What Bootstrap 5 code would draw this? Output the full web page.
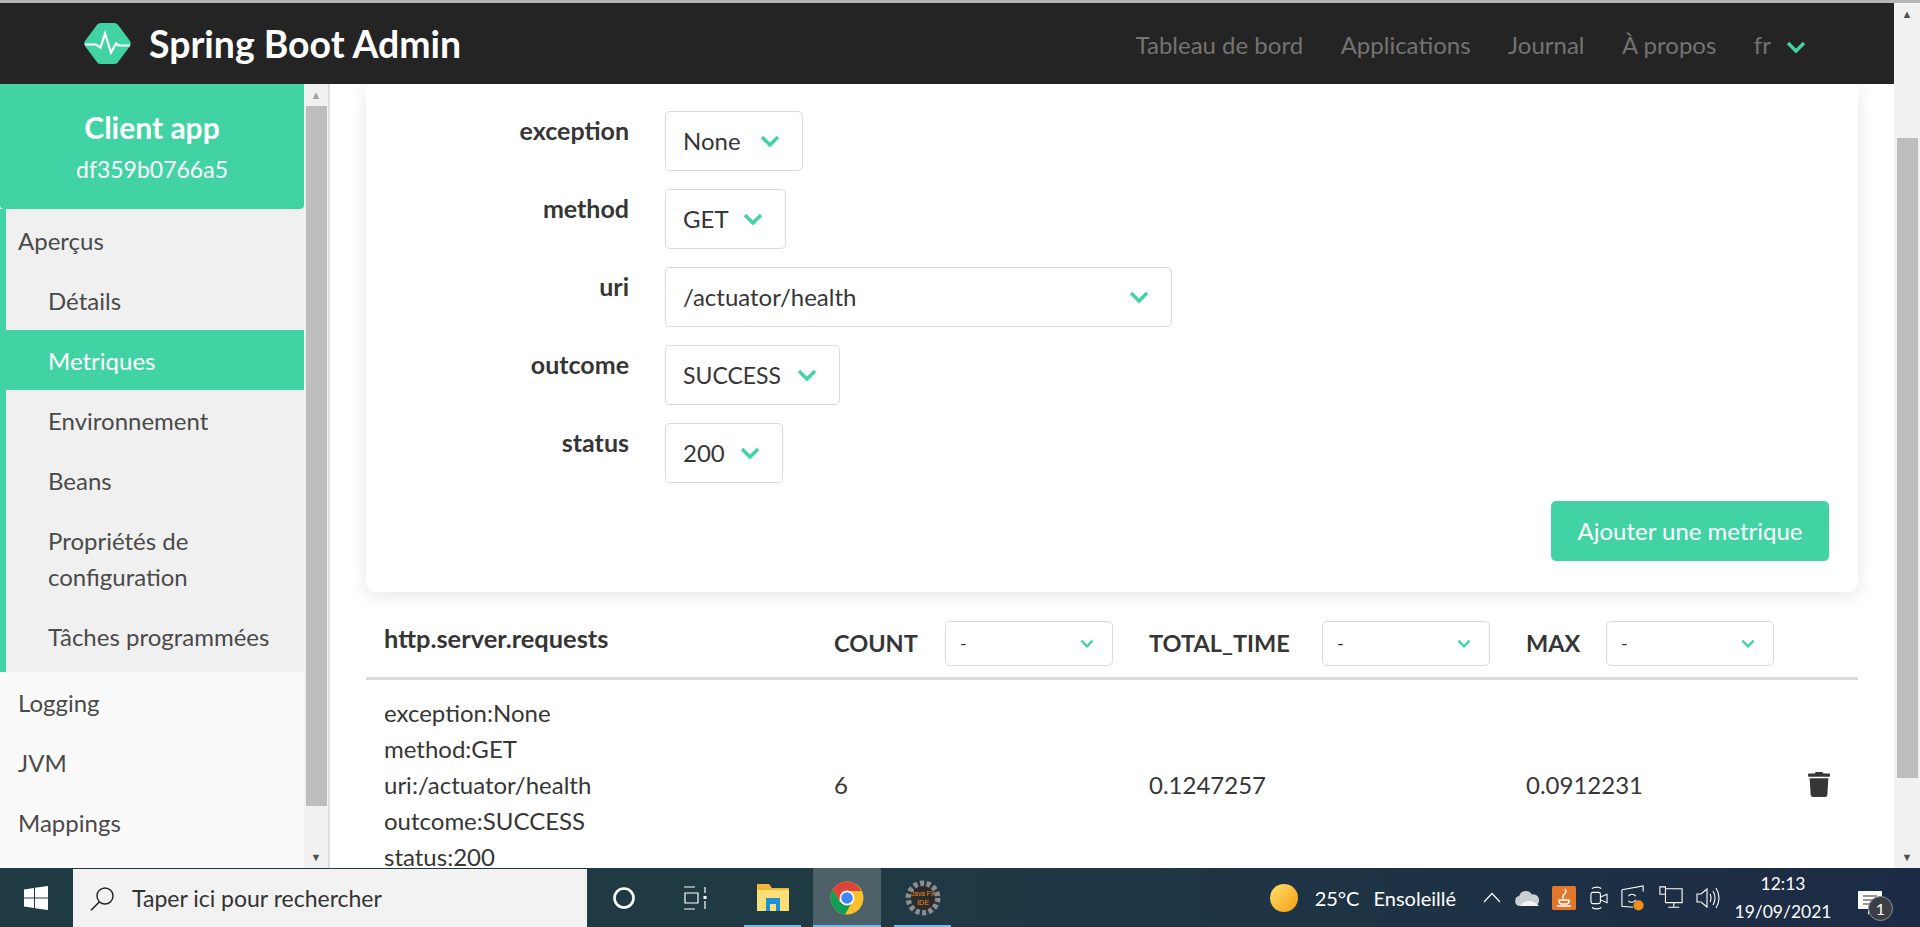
<!DOCTYPE html>
<html lang="fr">
<head>
    <meta charset="UTF-8">
    <meta name="viewport" content="width=device-width, initial-scale=1.0">
    <title>Spring Boot Admin</title>
    <link href="https://cdn.jsdelivr.net/npm/bootstrap@5.3.0/dist/css/bootstrap.min.css" rel="stylesheet">
    <style>
        html, body { height: 100%; }
        body { font-family: Lato, "Open Sans", "Liberation Sans", sans-serif; font-size: 24px; line-height: 1.5; color: #363636; background: #fff; overflow: hidden; }
        .screen { height: 927px; }
        .top-strip { height: 3px; background: #b5b5b5; }
        .sba-nav { height: 81px; background: #242424; padding: 0 88px 0 84px; flex-wrap: nowrap; }
        .sba-brand { color: #fff; font-size: 37.4px; font-weight: 700; gap: 18px; padding: 0; margin: 0; }
        .sba-brand:hover { color: #fff; }
        .brand-text { padding-top: 2px; }
        .sba-links { gap: 37.5px; font-size: 24px; padding-top: 2px; }
        .sba-links a { color: #737373; text-decoration: none; }
        .chev-nav { margin-left: 15px; }

        .sidebar { width: 304px; background: #fafafa; overflow: hidden; }
        .side-head { height: 125px; background: #42d3a5; color: #fff; border-radius: 0 0 4px 4px; }
        .side-title { font-size: 30px; font-weight: 700; line-height: 36px; }
        .side-sub { font-size: 23px; line-height: 30px; margin-top: 9px; }
        .side-group { background: #f0f0f0; border-left: 6px solid #42d3a5; padding-bottom: 6px; }
        .side-link { display: block; color: #4a4a4a; text-decoration: none; padding: 13px 18px 11px; line-height: 36px; background: transparent; border: 0; }
        .side-group .side-link.sub { padding-left: 42px; }
        .side-group .side-top { padding-left: 12px; padding-top: 14px; padding-bottom: 11px; }
        .side-link.on { background: #42d3a5; color: #fff; }
        .side-link.sub.two { padding-right: 30px; }

        .sbar { background: #f1f1f1; }
        .sbar-left { width: 26px; border-right: 2px solid #e0e0e0; }
        .sbar-right { width: 26px; }
        .sbar-arrow { height: 22px; font-size: 11px; line-height: 22px; color: #a3a3a3; text-align: center; }
        .sbar-arrow.dark { color: #505050; }
        .thumb { background: #bdbdbd; margin: 0 1px 0 2px; }
        .thumb-left { height: 700px; }
        .thumb-right { height: 640px; margin-top: 113px; margin-left: 3px; margin-right: 2px; }

        .content-area { min-width: 0; overflow: hidden; }
        .metric-box { margin-left: 36px; width: 1492px; background: #fff; border-radius: 0 0 10px 10px; box-shadow: 0 4px 20px rgba(10,10,10,.1); padding: 27px 29px 31px 0; }
        .f-row { margin-bottom: 18px; gap: 36px; }
        .f-label { width: 263px; text-align: right; font-size: 25px; font-weight: 700; padding-top: 1px; line-height: 36px; }
        .pick { height: 60px; font-size: 24px; color: #363636; border: 1px solid #dbdbdb; border-radius: 5px; padding: 0 17px;
            background-color: #fff; background-repeat: no-repeat; background-position: right 22px center; background-size: 20px 14px; box-shadow: none;
            background-image: url("data:image/svg+xml,%3Csvg xmlns='http://www.w3.org/2000/svg' viewBox='0 0 20 14'%3E%3Cpath d='M2 3l8 8 8-8' fill='none' stroke='%2342d3a5' stroke-width='3.4'/%3E%3C/svg%3E"); }
        .w-none { width: 138px; }
        .w-get { width: 121px; }
        .w-uri { width: 507px; }
        .w-succ { width: 175px; font-size: 23px; }
        .w-200 { width: 118px; }
        .w-small { width: 168px; height: 45px; font-size: 18px; padding: 0 14px; background-size: 14px 11px; background-position: right 18px center; }
        .add-btn { height: 60px; width: 278px; background: #42d3a5; color: #fff; border: 0; border-radius: 5px; font-size: 24px; padding: 0; }
        .add-btn:hover { background: #42d3a5; color: #fff; }

        .metric-table { position: relative; margin: 16px 0 0 36px; width: 1492px; table-layout: fixed; background: #fff; --bs-table-bg: transparent; color: #363636; }
        .metric-table th, .metric-table td { border: 0; padding: 0; vertical-align: middle; }
        .metric-table thead th { height: 70px; border-bottom: 3px solid #dbdbdb; font-size: 23.5px; font-weight: 700; white-space: nowrap; }
        .metric-table .c1 { width: 450px; padding-left: 18px; }
        .metric-table .c2 { width: 315px; padding-left: 18px; }
        .metric-table .c3 { width: 377px; padding-left: 18px; }
        .metric-table .c4 { width: 282px; padding-left: 18px; }
        .metric-table .c5 { width: 68px; padding-left: 18px; }
        .metric-table thead th.title-cell { padding-bottom: 8px; font-size: 25.4px; }
        .head-cell { padding-top: 2px; }
        .lab-count { width: 111px; }
        .lab-total { width: 173px; }
        .lab-max { width: 80px; }
        .metric-table td.tags { padding-top: 15px; padding-bottom: 15px; line-height: 36px; white-space: nowrap; }

        .taskbar { height: 59px; background: linear-gradient(90deg, #203a43 0, #203a44 45%, #1c2b45 100%); color: #fff; position: relative; }
        .win-slot { width: 73px; padding-left: 24px; }
        .search-box { width: 514px; height: 58px; margin-top: 1px; background: #f2f2f2; color: #333; gap: 17px; padding-left: 17px; font-size: 23px; }
        .task-slot { height: 59px; width: 68px; position: relative; }
        .task-slot.run::after { content: ""; position: absolute; left: 0; right: 0; bottom: 0; height: 2px; background: #76b9ed; }
        .task-slot.cur { background: #4b6067; }
        .tray-text { font-size: 20px; white-space: nowrap; }
        .clock { width: 112px; font-size: 17.5px; line-height: 28px; text-align: center; }
        .note-slot { width: 81px; height: 59px; padding: 16px 0 0 19px; }
        .note-badge { position: absolute; right: 27px; bottom: 6px; width: 25px; height: 25px; border-radius: 50%; background: #3b3f45; border: 1px solid #8a8f95; font-size: 16px; line-height: 23px; text-align: center; }
    </style>
</head>
<body>
<div class="screen d-flex flex-column">
    <div class="top-strip flex-shrink-0"></div>
    <div class="d-flex flex-grow-1 overflow-hidden">
        <div class="d-flex flex-column flex-grow-1 overflow-hidden">
            <nav class="navbar sba-nav flex-shrink-0">
                <a class="navbar-brand sba-brand d-flex align-items-center" href="#">
                    <svg width="47" height="41" viewBox="0 0 47 41">
                        <path d="M12.5 2.5Q13.8 0 16.5 0h14q2.700 0 4 2.500L46 18q1.500 2.500 0 5L34.500 38.500q-1.300 2.500-4 2.500h-14q-2.700 0-4-2.500L1 23q-1.500-2.500 0-5z" fill="#42d3a5"/>
                        <path d="M1 21.500h11l4.500 3 4.500-14 6 19 5-9 3 2h11" fill="none" stroke="#fff" stroke-width="2.200"/>
                    </svg>
                    <span class="brand-text">Spring Boot Admin</span>
                </a>
                <div class="sba-links d-flex align-items-center">
                    <a href="#">Tableau de bord</a>
                    <a href="#">Applications</a>
                    <a href="#">Journal</a>
                    <a href="#">À propos</a>
                    <a href="#">fr<svg class="chev-nav" width="20" height="14" viewBox="0 0 20 14"><path d="M2 3l8 8 8-8" fill="none" stroke="#42d3a5" stroke-width="3.400"/></svg></a>
                </div>
            </nav>
            <div class="d-flex flex-grow-1 overflow-hidden">
                <aside class="sidebar flex-shrink-0">
                    <div class="side-head d-flex flex-column align-items-center justify-content-center">
                        <div class="side-title">Client app</div>
                        <div class="side-sub">df359b0766a5</div>
                    </div>
                    <div class="side-group">
                        <a class="side-link side-top" href="#">Aperçus</a>
                        <a class="side-link sub" href="#">Détails</a>
                        <a class="side-link sub on" href="#">Metriques</a>
                        <a class="side-link sub" href="#">Environnement</a>
                        <a class="side-link sub" href="#">Beans</a>
                        <a class="side-link sub two" href="#">Propriétés de configuration</a>
                        <a class="side-link sub" href="#">Tâches programmées</a>
                    </div>
                    <a class="side-link" href="#">Logging</a>
                    <a class="side-link" href="#">JVM</a>
                    <a class="side-link" href="#">Mappings</a>
                </aside>
                <div class="sbar sbar-left flex-shrink-0 d-flex flex-column">
                    <div class="sbar-arrow">▲</div>
                    <div class="thumb thumb-left"></div>
                    <div class="flex-grow-1"></div>
                    <div class="sbar-arrow dark">▼</div>
                </div>
                <main class="content-area flex-grow-1">
                    <div class="metric-box">
                        <div class="f-row d-flex"><label class="f-label">exception</label><select class="form-select pick w-none"><option>None</option></select></div>
                        <div class="f-row d-flex"><label class="f-label">method</label><select class="form-select pick w-get"><option>GET</option></select></div>
                        <div class="f-row d-flex"><label class="f-label">uri</label><select class="form-select pick w-uri"><option>/actuator/health</option></select></div>
                        <div class="f-row d-flex"><label class="f-label">outcome</label><select class="form-select pick w-succ"><option>SUCCESS</option></select></div>
                        <div class="f-row d-flex"><label class="f-label">status</label><select class="form-select pick w-200"><option>200</option></select></div>
                        <div class="d-flex justify-content-end"><button type="button" class="btn add-btn">Ajouter une metrique</button></div>
                    </div>
                    <table class="table metric-table mb-0">
                        <thead>
                            <tr>
                                <th class="c1 title-cell">http.server.requests</th>
                                <th class="c2"><div class="head-cell d-flex align-items-center"><span class="lab-count">COUNT</span><select class="form-select pick w-small"><option>-</option></select></div></th>
                                <th class="c3"><div class="head-cell d-flex align-items-center"><span class="lab-total">TOTAL_TIME</span><select class="form-select pick w-small"><option>-</option></select></div></th>
                                <th class="c4"><div class="head-cell d-flex align-items-center"><span class="lab-max">MAX</span><select class="form-select pick w-small"><option>-</option></select></div></th>
                                <th class="c5"></th>
                            </tr>
                        </thead>
                        <tbody>
                            <tr>
                                <td class="c1 tags">exception:None<br>method:GET<br>uri:/actuator/health<br>outcome:SUCCESS<br>status:200</td>
                                <td class="c2">6</td>
                                <td class="c3">0.1247257</td>
                                <td class="c4">0.0912231</td>
                                <td class="c5"><svg class="d-block" width="22" height="25" viewBox="0 0 448 512"><path fill="#363636" d="M432 32H312l-9.400-18.700A24 24 0 0 0 281.100 0H166.800a23.720 23.720 0 0 0-21.400 13.300L136 32H16A16 16 0 0 0 0 48v32a16 16 0 0 0 16 16h416a16 16 0 0 0 16-16V48a16 16 0 0 0-16-16zM53.200 467a48 48 0 0 0 47.900 45h245.800a48 48 0 0 0 47.900-45L416 128H32z"/></svg></td>
                            </tr>
                        </tbody>
                    </table>
                </main>
            </div>
        </div>
        <div class="sbar sbar-right flex-shrink-0 d-flex flex-column">
            <div class="sbar-arrow dark">▲</div>
            <div class="thumb thumb-right"></div>
            <div class="flex-grow-1"></div>
            <div class="sbar-arrow dark">▼</div>
        </div>
    </div>
    <footer class="taskbar flex-shrink-0 d-flex align-items-center">
        <div class="win-slot flex-shrink-0 d-flex">
            <svg width="24" height="24" viewBox="0 0 24 24"><path fill="#fff" d="M0 3.400l10-1.400v9.400H0zM11 1.800L24 0v11.400H11zM0 12.500h10v9.500l-10-1.400zM11 12.500h13V24l-13-1.800z"/></svg>
        </div>
        <div class="search-box flex-shrink-0 d-flex align-items-center">
            <svg width="25" height="25" viewBox="0 0 25 25"><circle cx="15" cy="10" r="8" fill="none" stroke="#222" stroke-width="1.400"/><path d="M9.500 15.800L1 24.200" stroke="#222" stroke-width="1.600"/></svg>
            <span>Taper ici pour rechercher</span>
        </div>
        <div class="flex-shrink-0 d-flex align-items-center" style="margin-left:26px;gap:49px">
            <svg width="22" height="22" viewBox="0 0 22 22"><circle cx="11" cy="11" r="9.500" fill="none" stroke="#fff" stroke-width="2.600"/></svg>
            <svg width="24" height="24" viewBox="0 0 24 24"><path fill="none" stroke="#fff" stroke-width="1.200" d="M0 1h11M0 23h11M1 7h13v10H1zM21 1v6M21 15v8"/><rect x="19.500" y="10" width="3" height="3" fill="#fff"/></svg>
        </div>
        <div class="d-flex flex-shrink-0" style="margin-left:36px">
            <div class="task-slot run d-flex align-items-center justify-content-center" style="width:57px">
                <svg width="32" height="27" viewBox="0 0 32 27"><path d="M1 0h11l3 4h16a1 1 0 0 1 1 1v21a1 1 0 0 1-1 1H1a1 1 0 0 1-1-1V1a1 1 0 0 1 1-1z" fill="#f3b83a"/><path d="M0 6h32v21H0z" fill="#fbdf74"/><path d="M9 14h14v13H9z" fill="#1f8fd8"/><path d="M13 20h6v7h-6z" fill="#fbdf74"/></svg>
            </div>
            <div class="task-slot run cur d-flex align-items-center justify-content-center" style="margin-left:12px">
                <svg width="34" height="34" viewBox="0 0 34 34"><circle cx="17" cy="17" r="16.500" fill="#fbc02d"/><path d="M17 .5A16.500 16.500 0 0 0 2.700 8.800L9 19.500 17 10h14.300A16.500 16.500 0 0 0 17 .5z" fill="#db4437"/><path d="M2.700 8.800A16.500 16.500 0 0 0 15 33.400L21 23 10 21z" fill="#0f9d58"/><circle cx="17" cy="17" r="7.500" fill="#fff"/><circle cx="17" cy="17" r="5.800" fill="#4285f4"/></svg>
            </div>
            <div class="task-slot run d-flex align-items-center justify-content-center" style="width:57px;margin-left:13px">
                <svg width="36" height="36" viewBox="0 0 36 36"><circle cx="18" cy="18" r="14.500" fill="none" stroke="#8d8d8d" stroke-width="6" stroke-dasharray="4 2.500"/><circle cx="18" cy="18" r="12" fill="#2b2b2b"/><text x="18" y="16" font-size="6.500" fill="#f08a24" text-anchor="middle" font-family="Liberation Sans, sans-serif">Java FX</text><text x="18" y="25" font-size="7" fill="#f08a24" text-anchor="middle" font-family="Liberation Sans, sans-serif">IDE</text></svg>
            </div>
        </div>
        <div class="flex-grow-1"></div>
        <svg class="flex-shrink-0" width="28" height="28" viewBox="0 0 28 28"><defs><linearGradient id="sunfill" x1="0" y1="0" x2="1" y2="1"><stop offset="0" stop-color="#ffe26a"/><stop offset="1" stop-color="#f59c12"/></linearGradient></defs><circle cx="14" cy="14" r="14" fill="url(#sunfill)"/></svg>
        <span class="tray-text flex-shrink-0" style="margin-left:17px">25°C</span>
        <span class="tray-text flex-shrink-0" style="margin-left:14px">Ensoleillé</span>
        <div class="flex-shrink-0 d-flex align-items-center" style="margin-left:27px;gap:13.5px">
            <svg width="18" height="11" viewBox="0 0 18 11"><path d="M1 10l8-8.500 8 8.500" fill="none" stroke="#fff" stroke-width="1.200"/></svg>
            <svg width="24" height="16" viewBox="0 0 24 16"><path d="M5 16a5 5 0 0 1-.8-9.900A7 7 0 0 1 17 4.500a5.500 5.500 0 0 1 2.500 11.500z" fill="#c9ced3"/><path d="M5 16q3-5 9-5 6 0 10 5z" fill="#f2f3f4"/></svg>
            <svg width="24" height="24" viewBox="0 0 24 24"><rect width="24" height="24" rx="1.500" fill="#e2762a"/><path d="M13 3q2 3-1 5.500T12 12M7 14h10v1q0 3-3 3h-4q-3 0-3-3zM5 20h14" fill="none" stroke="#fff" stroke-width="1.500"/></svg>
            <svg width="18" height="28" viewBox="0 0 19 28"><rect x="1" y="8" width="10" height="12" rx="2" fill="none" stroke="#fff" stroke-width="1.200"/><path d="M11 13l7-3v9l-7-3M2 4q5-3 10 0M2 24q5 3 10 0" fill="none" stroke="#fff" stroke-width="1.100"/></svg>
            <svg width="24" height="28" viewBox="0 0 26 28"><path d="M1 5l23-4v6M1 5v18l12 1" fill="none" stroke="#fff" stroke-width="1.200"/><path d="M8 12a5 5 0 0 1 8 0M16 16a5 5 0 0 1-8 1" fill="none" stroke="#fff" stroke-width="1.200"/><circle cx="19" cy="22" r="5.500" fill="#f28c18"/></svg>
            <svg width="24" height="24" viewBox="0 0 26 24"><path d="M7 2h18v15H7M1 0h6v8H1zM1 8h6v9M16 17v5M10 22h12" fill="none" stroke="#fff" stroke-width="1.200"/></svg>
            <svg width="24" height="22" viewBox="0 0 24 22"><path d="M1 7h4l6-5v18l-6-5H1zM14 7q2 4 0 8M17 4q4 7 0 14M20 1q6 10 0 20" fill="none" stroke="#fff" stroke-width="1.100"/></svg>
        </div>
        <div class="clock flex-shrink-0" style="margin-left:7px">12:13<br>19/09/2021</div>
        <div class="note-slot flex-shrink-0">
            <svg width="25" height="28" viewBox="0 0 25 28"><path d="M0 0h24v18H14l-4 6V18H0z" fill="#fff"/><path d="M5 5h14M5 9h14M5 13h9" stroke="#333" stroke-width="1.200"/></svg>
        </div>
        <div class="note-badge">1</div>
    </footer>
</div>
<script src="https://cdn.jsdelivr.net/npm/bootstrap@5.3.0/dist/js/bootstrap.bundle.min.js"></script>
</body>
</html>
